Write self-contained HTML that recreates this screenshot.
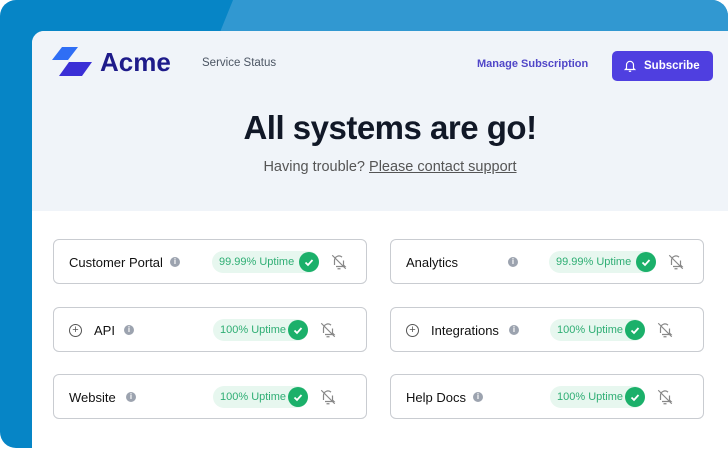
<!DOCTYPE html><html><head><style>
body{margin:0;width:728px;height:448px;overflow:hidden;font-family:"Liberation Sans",sans-serif;background:#fff}
.bg{position:absolute;left:0;top:0;width:728px;height:448px;border-radius:16px;background:#0685c6;overflow:hidden}
.bg2{position:absolute;left:233px;top:0;width:600px;height:448px;background:#3198d1;transform:skewX(-22deg);transform-origin:0 0}
.card{position:absolute;left:32px;top:31px;width:716px;height:430px;border-radius:12px;background:#fff;overflow:hidden}
.hdr{height:180px;background:#f0f4f9;position:relative}
.t{position:absolute;white-space:nowrap}
.box{position:absolute;width:314px;height:45px;border:1px solid #c9ccd1;border-radius:6px;box-sizing:border-box;background:#fff}
.nm{position:absolute;top:15px;font-size:13px;color:#111}
.info{position:absolute;top:17px;width:10px;height:10px;border-radius:50%;background:#9ca3af;color:#fff;font-size:8px;text-align:center;line-height:10px;font-weight:bold}
.pill{position:absolute;top:11px;height:22px;border-radius:11px;background:#e7f7ef;color:#2fae74;font-size:11px;line-height:22px;padding-left:7px;box-sizing:border-box}
.chk{position:absolute;right:0;top:1px;width:20px;height:20px;border-radius:50%;background:#1bb06a}
.bell{position:absolute;top:13px}
.plus{position:absolute;left:15px;top:16px;width:11px;height:11px;border:1px solid #555;border-radius:50%;font-size:11px;line-height:11px;text-align:center;color:#555}
</style></head><body>
<div class="bg"><div class="bg2"></div></div>
<div class="card"><div class="hdr">
<svg class="t" style="left:20px;top:16px" width="42" height="30"><polygon points="10,0 26,0 16,13 0,13" fill="#2f6ef5"/><polygon points="17,15 40,15 30,29 7,29" fill="#3b2fd6"/></svg>
<div class="t" style="left:68px;top:16px;font-size:26px;font-weight:bold;color:#1e1b8a">Acme</div>
<div class="t" style="left:170px;top:26px;font-size:11.5px;color:#4b5563">Service Status</div>
<div class="t" style="left:445px;top:27px;font-size:11px;font-weight:bold;color:#5046c8">Manage Subscription</div>
<div class="t" style="left:580px;top:20px;width:101px;height:30px;border-radius:5px;background:#4f3fe0;color:#fff;font-size:11.5px;font-weight:bold;line-height:30px;text-indent:32px">Subscribe
<svg style="position:absolute;left:11px;top:8px" width="14" height="14" viewBox="0 0 24 24" fill="none" stroke="#fff" stroke-width="2"><path d="M6 16V10a6 6 0 0 1 12 0v6l2 2H4z M10 21h4"/></svg></div>
<div class="t" style="left:0;width:716px;text-align:center;top:78px;font-size:33px;font-weight:bold;color:#111827;letter-spacing:-0.5px">All systems are go!</div>
<div class="t" style="left:0;width:716px;text-align:center;top:128px;font-size:14.5px;color:#555">Having trouble? <span style="text-decoration:underline">Please contact support</span></div>
</div></div>
<div id="g"></div>
<script>
var rows=[[239,'Customer Portal','99.99%',0,'Analytics','99.99%',0],[307,'API','100%',1,'Integrations','100%',1],[374,'Website','100%',0,'Help Docs','100%',0]];
var h='';
rows.forEach(function(r){[[53,r[1],r[2],r[3]],[390,r[4],r[5],r[6]]].forEach(function(c){
var x=c[0],off=c[3]?40:15;
var pw=c[2]=='100%'?95:107;var pl=c[2]=='100%'?159:158;
var nl={'Customer Portal':116,'Analytics':117,'API':70,'Integrations':118,'Website':72,'Help Docs':82}[c[1]];
var bl=c[2]=='100%'?265:276;
h+='<div class="box" style="left:'+x+'px;top:'+r[0]+'px">'+(c[3]?'<div class="plus">+</div>':'')+
'<div class="nm" style="left:'+off+'px">'+c[1]+'</div><div class="info" style="left:'+nl+'px">i</div>'+
'<div class="pill" style="left:'+pl+'px;width:'+pw+'px">'+c[2]+' Uptime<div class="chk"><svg width="20" height="20"><path d="M6.5 10.5l2.5 2.5 4.5-5" stroke="#fff" stroke-width="1.8" fill="none"/></svg></div></div>'+
'<svg class="bell" style="left:'+bl+'px" width="18" height="18" viewBox="0 0 24 24" fill="none" stroke="#888" stroke-width="1.6"><path d="M6 16V10a6 6 0 0 1 10-4.5M18 10v6l2 2H8M10 21h4M3 3l18 18"/></svg></div>';});});
document.getElementById('g').innerHTML=h;
</script>
</body></html>
